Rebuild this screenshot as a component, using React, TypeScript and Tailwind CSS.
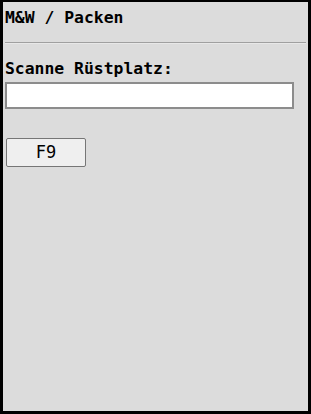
export default function App() {
  const mono = { fontFamily: '"DejaVu Sans Mono", monospace' };
  return (
    <div
      className="w-[311px] h-[414px] bg-[#dcdcdc] border-black border-[3px] border-t-2 flex flex-col"
      style={mono}
    >
      <div className="pl-[2px] pt-[6px] text-[16.4px] leading-[20px] font-bold text-black">M&amp;W / Packen</div>
      <div className="mt-[14px] ml-[2px] mr-[2px] h-[2px] bg-[#a0a0a0] border-b border-[#e8e8e8]"></div>
      <div className="pl-[2px] mt-[15px] text-[16.4px] leading-[20px] font-bold text-black">Scanne Rüstplatz:</div>
      <div className="pl-[2px] mt-[3px]">
        <input className="w-[289px] h-[27px] bg-white border-2 border-[#8c8c8c] outline-none" />
      </div>
      <div className="pl-[3px] mt-[29px]">
        <button className="w-[80px] h-[29px] bg-[#efefef] border border-[#767676] rounded-[2px] text-[17px] text-black flex items-center justify-center">
          F9
        </button>
      </div>
    </div>
  );
}
